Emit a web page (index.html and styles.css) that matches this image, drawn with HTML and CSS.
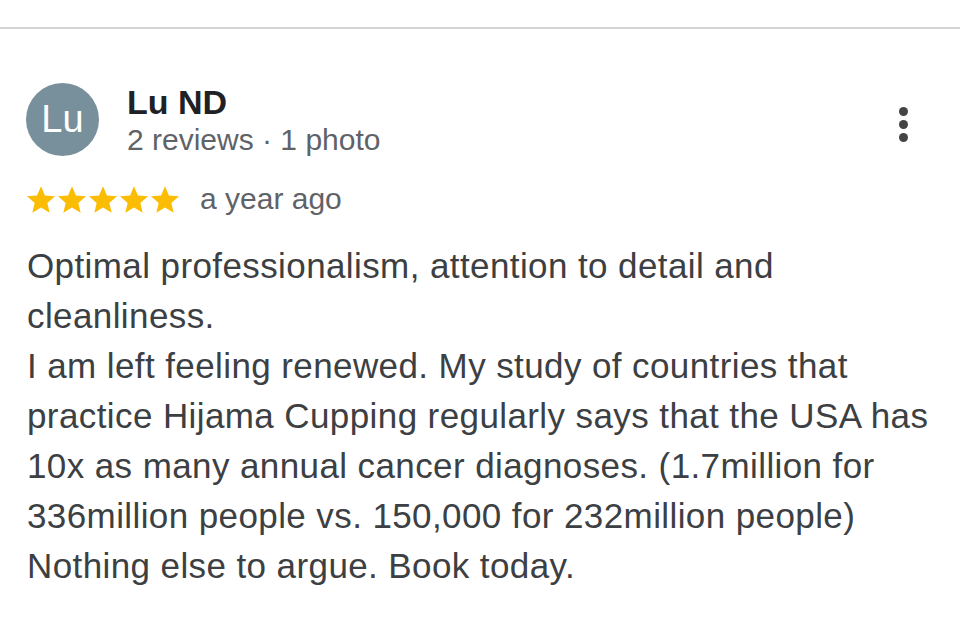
FILE: index.html
```html
<!DOCTYPE html>
<html lang="en">
<head>
  <meta charset="UTF-8">
  <title>Review</title>
  <link rel="stylesheet" href="styles.css">
</head>
<body>
  <div class="divider"></div>

  <div class="review">
    <div class="review-head">
      <div class="avatar">Lu</div>
      <div class="author">
        <div class="author-name">Lu ND</div>
        <div class="author-meta">2 reviews · 1 photo</div>
      </div>
      <div class="menu">
        <span class="dot"></span>
        <span class="dot"></span>
        <span class="dot"></span>
      </div>
    </div>

    <div class="rating">
      <div class="stars">
        <svg class="star" viewBox="2 2 20 19"><path d="M12 17.27L18.18 21l-1.64-7.03L22 9.24l-7.19-.61L12 2 9.19 8.63 2 9.24l5.46 4.73L5.82 21z"/></svg>
        <svg class="star" viewBox="2 2 20 19"><path d="M12 17.27L18.18 21l-1.64-7.03L22 9.24l-7.19-.61L12 2 9.19 8.63 2 9.24l5.46 4.73L5.82 21z"/></svg>
        <svg class="star" viewBox="2 2 20 19"><path d="M12 17.27L18.18 21l-1.64-7.03L22 9.24l-7.19-.61L12 2 9.19 8.63 2 9.24l5.46 4.73L5.82 21z"/></svg>
        <svg class="star" viewBox="2 2 20 19"><path d="M12 17.27L18.18 21l-1.64-7.03L22 9.24l-7.19-.61L12 2 9.19 8.63 2 9.24l5.46 4.73L5.82 21z"/></svg>
        <svg class="star" viewBox="2 2 20 19"><path d="M12 17.27L18.18 21l-1.64-7.03L22 9.24l-7.19-.61L12 2 9.19 8.63 2 9.24l5.46 4.73L5.82 21z"/></svg>
      </div>
      <span class="when">a year ago</span>
    </div>

    <p class="review-text">Optimal professionalism, attention to detail and cleanliness.<br>I am left feeling renewed. My study of countries that practice Hijama Cupping regularly says that the USA has 10x as many annual cancer diagnoses. (1.7million for 336million people vs. 150,000 for 232million people)<br>Nothing else to argue. Book today.</p>
  </div>
</body>
</html>
```

FILE: styles.css
```css
* {
  box-sizing: border-box;
  font-family: 'Liberation Sans', Arial, sans-serif;
}

body {
  margin: 0;
  background: #ffffff;
  color: #3c4043;
}

.divider {
  margin-top: 27px;
  height: 2px;
  background: #d3d3d3;
}

.review {
  padding: 54px 20px 0 27px;
}

.review-head {
  display: flex;
  align-items: flex-start;
}

.avatar {
  width: 73px;
  height: 73px;
  margin-left: -1px;
  border-radius: 50%;
  background: #78909c;
  color: #ffffff;
  font-size: 38px;
  display: flex;
  align-items: center;
  justify-content: center;
  flex-shrink: 0;
}

.author {
  margin-left: 28px;
  flex: 1;
  margin-top: -1px;
}

.author-name {
  font-size: 34px;
  font-weight: bold;
  color: #202124;
  line-height: 40px;
}

.author-meta {
  font-size: 30px;
  color: #5f6368;
  line-height: 36px;
}

.menu {
  display: flex;
  flex-direction: column;
  gap: 4px;
  margin-top: 24px;
  margin-right: 32px;
}

.dot {
  width: 9px;
  height: 9px;
  border-radius: 50%;
  background: #444444;
}

.rating {
  display: flex;
  align-items: center;
  margin-top: 24px;
  height: 34px;
}

.stars {
  display: flex;
  gap: 3px;
}

.star {
  width: 28px;
  height: 27px;
  fill: #fbbc04;
}

.when {
  margin-left: 21px;
  font-size: 30px;
  line-height: 34px;
  color: #5f6368;
}

.review-text {
  margin: 25px 0 0;
  font-size: 35px;
  letter-spacing: 0.4px;
  line-height: 50px;
  color: #3c4043;
}
```
